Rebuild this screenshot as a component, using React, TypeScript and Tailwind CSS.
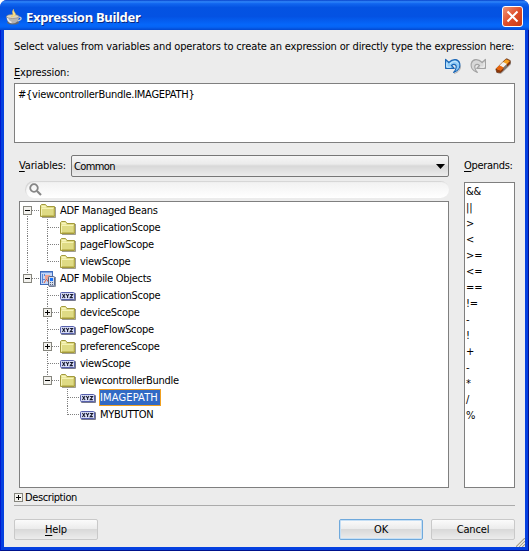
import type { ReactNode } from "react";

type IconKind = "folder" | "xyz" | "mobile";
type Toggle = "plus" | "minus";

interface TreeNode {
  label: string;
  icon: IconKind;
  guides: string[];
  toggle?: Toggle;
  selected?: boolean;
}

// One guide per 20px column: "bar" full height, "tee" joins a row, "end" closes a branch, "top" opens one
const nodes: TreeNode[] = [
  { label: "ADF Managed Beans", icon: "folder", guides: ["top"], toggle: "minus" },
  { label: "applicationScope", icon: "folder", guides: ["bar", "tee"] },
  { label: "pageFlowScope", icon: "folder", guides: ["bar", "tee"] },
  { label: "viewScope", icon: "folder", guides: ["bar", "end"] },
  { label: "ADF Mobile Objects", icon: "mobile", guides: ["end"], toggle: "minus" },
  { label: "applicationScope", icon: "xyz", guides: ["none", "tee"] },
  { label: "deviceScope", icon: "folder", guides: ["none", "tee"], toggle: "plus" },
  { label: "pageFlowScope", icon: "xyz", guides: ["none", "tee"] },
  { label: "preferenceScope", icon: "folder", guides: ["none", "tee"], toggle: "plus" },
  { label: "viewScope", icon: "xyz", guides: ["none", "tee"] },
  { label: "viewcontrollerBundle", icon: "folder", guides: ["none", "end"], toggle: "minus" },
  { label: "IMAGEPATH", icon: "xyz", guides: ["none", "none", "tee"], selected: true },
  { label: "MYBUTTON", icon: "xyz", guides: ["none", "none", "end"] },
];

const operands = ["&&", "||", ">", "<", ">=", "<=", "==", "!=", "-", "!", "+", "-", "*", "/", "%"];

function ToggleBox({ kind }: { kind: Toggle }) {
  return (
    <g shapeRendering="crispEdges">
      <rect x="3.5" y="4.5" width="8" height="8" fill="#f3f2ee" stroke="#85857d" />
      <path d="M5 8.5h5" stroke="#000" />
      {kind === "plus" ? <path d="M7.5 6v5" stroke="#000" /> : null}
    </g>
  );
}

function Guide({ kind, toggle }: { kind: string; toggle?: Toggle }) {
  return (
    <svg className="h-[17px] w-5 shrink-0" viewBox="0 0 20 17" fill="none">
      <g stroke="#808080" strokeDasharray="1 1" shapeRendering="crispEdges">
        {kind === "bar" || kind === "tee" ? <path d="M7.5 0v17" /> : null}
        {kind === "end" ? <path d="M7.5 0v9" /> : null}
        {kind === "top" ? <path d="M7.5 8v9" /> : null}
        {kind === "tee" || kind === "end" || kind === "top" ? <path d="M8 8.5h12" /> : null}
      </g>
      {toggle ? <ToggleBox kind={toggle} /> : null}
    </svg>
  );
}

function FolderIcon() {
  return (
    <svg className="h-4 w-4" viewBox="0 0 16 16">
      <path d="M2 14.5h13.5V4" fill="none" stroke="#77745f" strokeOpacity=".7" />
      <path d="M.5 13.5v-11l1-1h4l1.500 2h7.500v10z" fill="#dfdb84" stroke="#a39a3c" />
      <path d="M1.500 4.500v-2h4l1 2z" fill="#f8f5bb" />
      <path d="M1.500 12.500v-7h12" fill="none" stroke="#f6f3b4" />
      <path d="M2 12.500h12v-7" fill="none" stroke="#c5bd5c" />
    </svg>
  );
}

function XyzIcon() {
  return (
    <svg className="h-4 w-4" viewBox="0 0 16 16">
      <rect x="1" y="5" width="15" height="8" rx="1" fill="#77798d" />
      <rect x=".5" y="4.500" width="14" height="7" rx="1" fill="#d9def8" stroke="#5660ad" />
      <g stroke="#15182c" strokeWidth="1.050" fill="none">
        <path d="M2.400 6l2.700 4M5.100 6l-2.700 4" />
        <path d="M6.200 6l1.400 2 1.400-2M7.600 8v2" />
        <path d="M10.100 6.400h2.500L10.200 9.600h2.600" />
      </g>
    </svg>
  );
}

function MobileIcon() {
  return (
    <svg className="h-4 w-4" viewBox="0 0 16 16">
      <rect x=".5" y=".5" width="12" height="13" fill="#c5d6f6" stroke="#416dbd" />
      <path d="M1 1.500h11" stroke="#79a0e4" />
      <path d="M2.500 3v9M4.500 3v2M2 8.500h3" stroke="#5b86d3" />
      <path d="M5 4h5v4H5z" fill="#f0a291" />
      <path d="M4 12l2.500-4L9 12" stroke="#e2603e" fill="none" />
      <path d="M9 15.500h6.500V6" stroke="#8d93a0" fill="none" />
      <rect x="8.500" y="5.500" width="6" height="9.500" rx=".8" fill="#d5dded" stroke="#58678b" />
      <path d="M10 7h3v3h-3z" fill="#1674ff" />
      <path d="M10 11.500h3M10 13.500h3" stroke="#54617c" strokeDasharray="1 1" />
    </svg>
  );
}

function NodeIcon({ kind }: { kind: IconKind }) {
  if (kind === "folder") return <FolderIcon />;
  if (kind === "xyz") return <XyzIcon />;
  return <MobileIcon />;
}

function TreeRow({ node }: { node: TreeNode }) {
  return (
    <div className="flex h-[17px] items-center">
      {node.guides.map((kind, i) => (
        <Guide key={i} kind={kind} toggle={i === node.guides.length - 1 ? node.toggle : undefined} />
      ))}
      <span className="w-[19px] shrink-0">
        <NodeIcon kind={node.icon} />
      </span>
      <span
        className={
          node.selected
            ? "flex h-[17px] w-[62px] items-center border border-[#f0a020] bg-[#316ac5] tracking-[0.15px] text-white"
            : "pl-px tracking-[-0.28px]"
        }
      >
        {node.label}
      </span>
    </div>
  );
}

function CupIcon() {
  return (
    <svg className="mt-[3px] h-4 w-4" viewBox="0 0 16 16">
      <ellipse cx="7" cy="13.500" rx="6" ry="2" fill="#66686e" />
      <path d="M12 8.500c4-1.500 4.500 2.500-.5 3.500" fill="none" stroke="#c8c8cc" strokeWidth="1.300" />
      <path d="M.5 7.500c0 4 2 7 6 7s6.500-3 6.500-7z" fill="#b4b4b4" />
      <path d="M1.500 8.500c.5 3 2 4.500 4 5" fill="none" stroke="#eee" strokeWidth="1.500" />
      <ellipse cx="6.700" cy="7.500" rx="6.200" ry="2" fill="#d9d4c5" stroke="#8c8a86" strokeWidth=".7" />
      <path d="M5 7.500C9.500 6 5 4.500 7.500.5c-.5 2.500 3.500 4 1 6.500z" fill="#ffe797" stroke="#f1c960" strokeWidth=".8" />
    </svg>
  );
}

function UndoIcon() {
  return (
    <svg className="h-4 w-4" viewBox="0 0 16 16">
      <path d="M9 15.500c4.500-1 7-4.500 6.500-8" fill="none" stroke="#888" strokeOpacity=".6" />
      <path d="M.6 1.300v9h8.700L6.500 7.500c2.500-2 5-.8 4.700 1.800-.2 2-1.200 3.700-2.500 5.200 4.700-1.700 6.900-5.500 5.900-9.300C13.300.8 8 .3 3.800 4.500z" fill="#8dcbf8" stroke="#1b66b5" strokeWidth="1.200" strokeLinejoin="round" />
      <path d="M1.800 4.500v4.700h4M5 5.800C8.300 2.800 11.700 3 13 5.500" stroke="#d6f0ff" fill="none" />
    </svg>
  );
}

function RedoIcon() {
  return (
    <svg className="h-4 w-4" viewBox="0 0 16 16">
      <path d="M15.400 1.300v9H6.700l2.800-2.800c-2.500-2-5-.8-4.700 1.800.2 2 1.200 3.700 2.500 5.200C2.600 12.800.4 9 1.400 5.200 2.700.8 8 .3 12.200 4.500z" fill="#d8d8d8" stroke="#a3a3a3" strokeWidth="1.200" strokeLinejoin="round" />
      <path d="M14.200 4.500v4.700h-4" stroke="#f4f4f4" fill="none" />
    </svg>
  );
}

function EraserIcon() {
  return (
    <svg className="h-4 w-4" viewBox="0 0 16 16">
      <path d="M3 15.500h3.500L16 6.500v-4z" fill="#777" opacity=".55" />
      <path d="M.8 11L10.500 1.300l1.300-.6 3.400 1.800v3L5.500 14.800l-3.700-.3z" fill="#8e3608" stroke="#5c2a0c" strokeWidth=".6" />
      <path d="M1.200 10.800L11 1.200l4 1.800-9.500 9.500z" fill="#f6a01f" />
      <path d="M4.500 7.500l3.500-3.500 4 2-3.500 3.500z" fill="#f1f1f1" />
      <path d="M8.500 9.500L12 6v3l-3.500 3.300z" fill="#777" />
      <path d="M1.200 10.800l3.300-3.300 4 2-3 3z" fill="#e8630f" />
    </svg>
  );
}

function ResizeGrip() {
  return (
    <svg className="absolute right-0 bottom-0 h-[9px] w-[9px]" viewBox="0 0 9 9">
      <path d="M0 9l9-9M3 9l6-6M6 9l3-3" stroke="#a9a48c" strokeWidth="1.300" />
      <path d="M1.500 9L9 1.500M4.500 9L9 4.500" stroke="#fff" strokeWidth=".8" />
    </svg>
  );
}

function DialogButton({ children, primary }: { children: ReactNode; primary?: boolean }) {
  return (
    <button
      className={
        primary
          ? "h-[21px] w-[84px] rounded-[2px] border border-[#6fa9dc] bg-[linear-gradient(180deg,#fbfbfb_0%,#ececec_45%,#d9d9d9_50%,#ececec_100%)] text-center leading-[17px] shadow-[inset_0_0_0_1px_#c5dff5]"
          : "h-[21px] w-[84px] rounded-[2px] border border-[#c9c9c9] bg-[linear-gradient(180deg,#fbfbfb_0%,#ececec_45%,#d9d9d9_50%,#ececec_100%)] text-center leading-[17px]"
      }
    >
      {children}
    </button>
  );
}

export default function App() {
  return (
    <div className="flex h-[551px] w-[529px] flex-col overflow-hidden rounded-t-[7px] bg-[#0831d9] font-['DejaVu_Sans_Condensed','DejaVu_Sans',sans-serif] text-[11px] leading-[17px] tracking-[-0.15px] whitespace-nowrap text-black">
      <header className="flex h-[30px] shrink-0 items-center bg-[linear-gradient(180deg,#0842ca_0%,#2f86fa_6%,#1266ef_12%,#0453e2_25%,#0452e3_55%,#0567fa_82%,#0564f5_90%,#0348cf_100%)] pr-[6px] pl-[6px]">
        <CupIcon />
        <h1 className="ml-1 pt-1 font-['Noto_Sans',sans-serif] text-[13px] font-bold tracking-[-0.3px] text-white [text-shadow:1px_1px_0_#0a2a80]">
          Expression Builder
        </h1>
        <button className="mt-[3px] ml-auto flex h-[21px] w-[21px] items-center justify-center rounded-[3px] border border-white bg-linear-to-br from-[#ee9375] via-[#df4d29] to-[#c83b12]">
          <svg className="h-[13px] w-[13px]" viewBox="0 0 13 13">
            <path d="M1.500 1.500l10 10M11.500 1.500l-10 10" stroke="#fff" strokeWidth="2" />
          </svg>
        </button>
      </header>

      <div className="flex h-[521px] border-r border-b border-l border-r-[#00138c] border-b-[#00138c] border-l-[#0019cf] bg-[#0540e0]">
        <main className="relative mr-[3px] ml-[3px] flex h-[517px] w-[521px] flex-col bg-[#ececec] px-[10px]">
          <p className="mt-2 h-[17px] tracking-[-0.147px]">
            Select values from variables and operators to create an expression or directly type the expression here:
          </p>
          <div className="flex h-[28px] justify-between">
            <span className="pt-[9px]">
              <u className="underline-offset-2">E</u>xpression:
            </span>
            <div className="flex gap-[9px] pt-[3px] pr-1">
              <UndoIcon />
              <RedoIcon />
              <EraserIcon />
            </div>
          </div>
          <div className="h-[60px] border border-[#7f7f7f] bg-white pt-[2px] pl-[3px] tracking-[-0.26px]">{"#{viewcontrollerBundle.IMAGEPATH}"}</div>

          <div className="mt-3 flex h-[333px] justify-between pl-[5px]">
            <section className="flex w-[430px] flex-col">
              <div className="flex h-[22px] items-center">
                <span className="w-[52px] pb-[2px]">
                  <u className="underline-offset-2">V</u>ariables:
                </span>
                <button className="flex h-[22px] flex-1 items-center justify-between rounded-[2px] border border-[#777] bg-[linear-gradient(180deg,#f6f6f6_0%,#ebebeb_40%,#d8d8d8_50%,#ececec_100%)] pr-[3px] pl-[2px] tracking-[-0.6px]">
                  Common
                  <svg className="h-[5px] w-[9px]" viewBox="0 0 9 5">
                    <path d="M0 0h9L4.500 5z" />
                  </svg>
                </button>
              </div>
              <div className="mt-1 ml-[6px] flex h-[17px] items-center rounded-full bg-linear-to-b from-[#f1f1f1] to-white pl-1 shadow-[inset_1px_1px_1px_#d4d4d4]">
                <svg className="h-[13px] w-[13px]" viewBox="0 0 13 13" fill="none" stroke="#858585">
                  <circle cx="5" cy="5" r="3.800" strokeWidth="1.800" />
                  <path d="M8 8l4 4" strokeWidth="2.200" />
                </svg>
              </div>
              <div className="mt-[3px] h-[287px] border border-[#7f7f7f] bg-white">
                {nodes.map((node, i) => (
                  <TreeRow key={i} node={node} />
                ))}
              </div>
            </section>

            <section className="w-[51px]">
              <div className="h-[27px] pt-[2px] tracking-[-0.3px]">
                <u className="underline-offset-2">O</u>perands:
              </div>
              <div className="h-[306px] border border-[#7f7f7f] bg-white pt-px pl-px">
                {operands.map((operand, i) => (
                  <div className="h-4 leading-4" key={i}>
                    {operand}
                  </div>
                ))}
              </div>
            </section>
          </div>

          <div className="mt-px flex h-[17px] items-center gap-[2px] border-b border-[#ababab] tracking-[-0.4px]">
            <svg className="h-[9px] w-[9px]" viewBox="3 4 9 9">
              <ToggleBox kind="plus" />
            </svg>
            Description
          </div>
          <footer className="mt-[13px] flex">
            <DialogButton>
              <u className="underline-offset-2">H</u>elp
            </DialogButton>
            <div className="ml-auto flex gap-2">
              <DialogButton primary>OK</DialogButton>
              <DialogButton>Cancel</DialogButton>
            </div>
          </footer>
          <ResizeGrip />
        </main>
      </div>
    </div>
  );
}
